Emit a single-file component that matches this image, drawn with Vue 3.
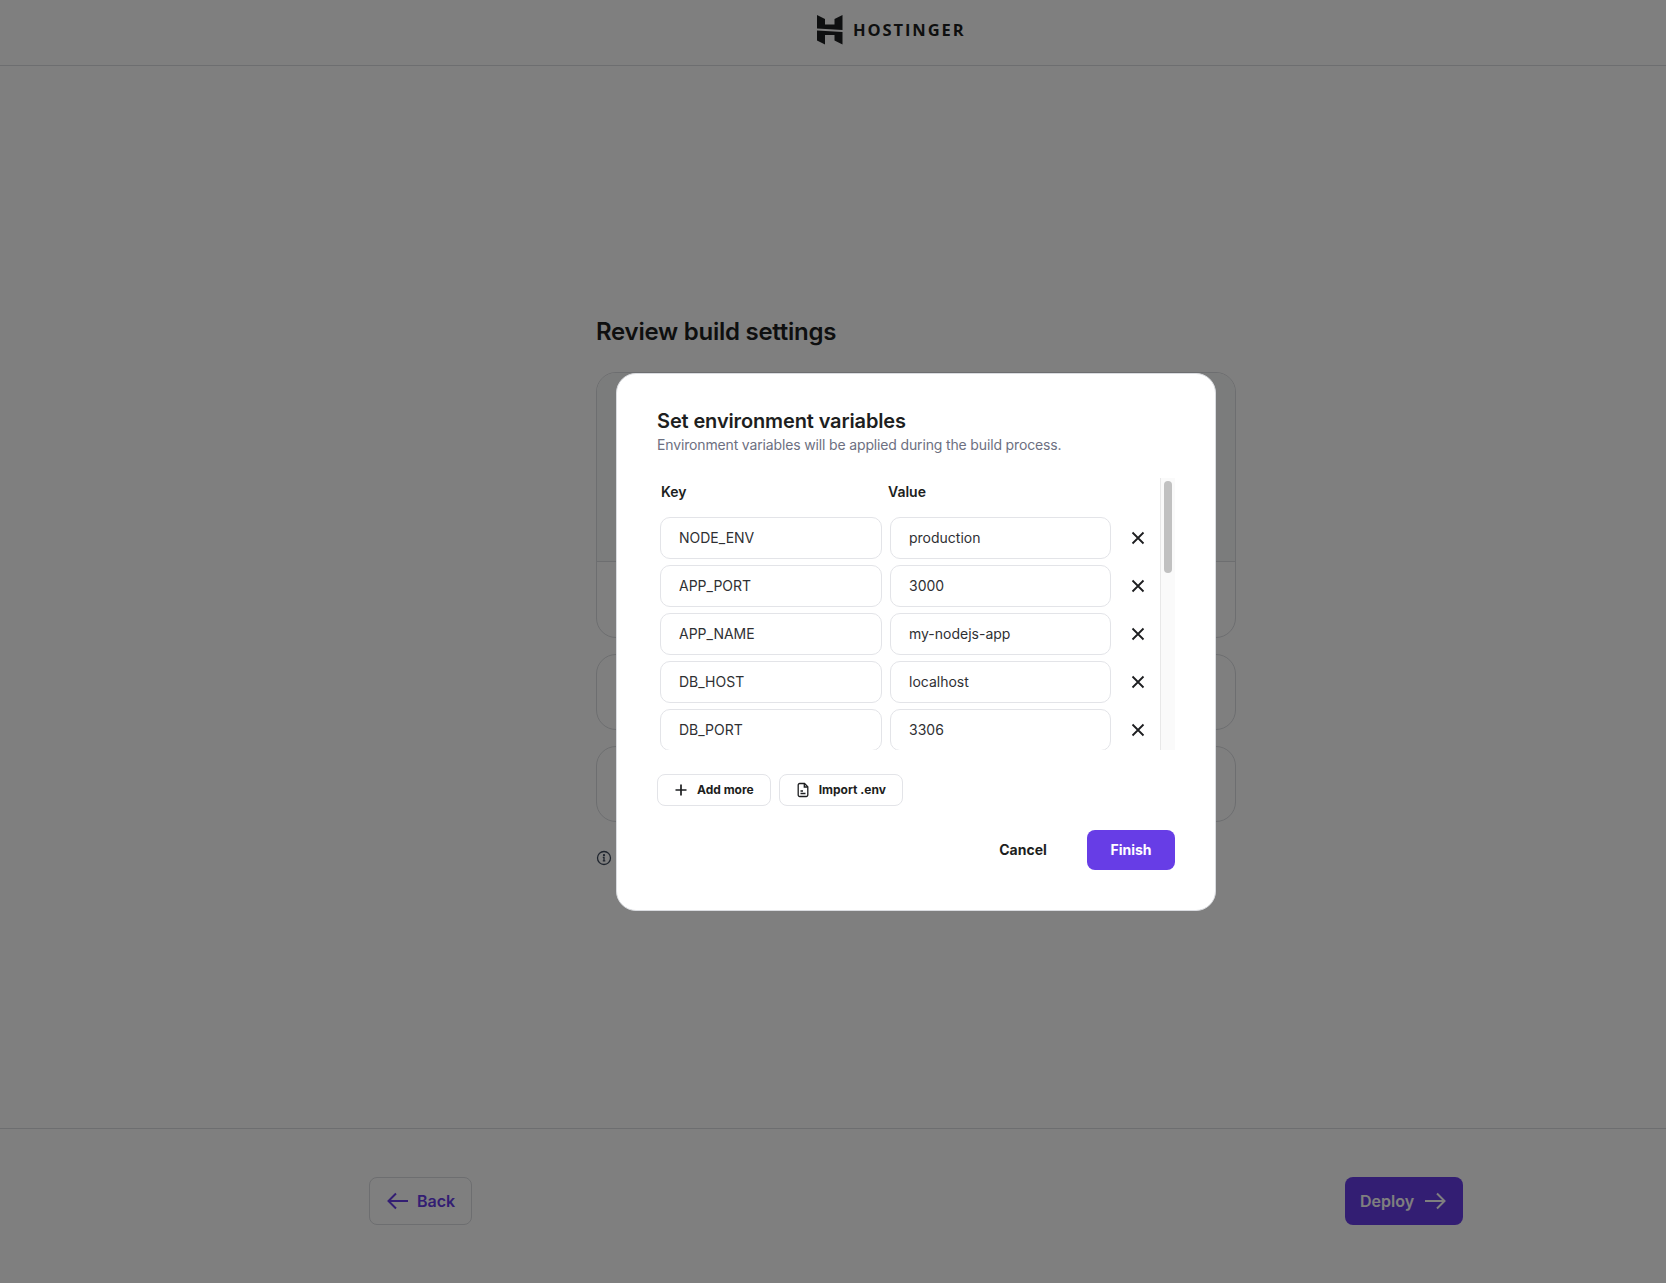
<script setup>
import { ref } from 'vue'

// Переменные окружения
const envVars = ref([
  { key: 'NODE_ENV', value: 'production' },
  { key: 'APP_PORT', value: '3000' },
  { key: 'APP_NAME', value: 'my-nodejs-app' },
  { key: 'DB_HOST', value: 'localhost' },
  { key: 'DB_PORT', value: '3306' },
  { key: 'DB_NAME', value: 'my_database' },
  { key: 'DB_USER', value: 'db_user' },
  { key: 'DB_PASSWORD', value: 'secret' },
  { key: 'REDIS_HOST', value: 'localhost' },
  { key: 'REDIS_PORT', value: '6379' },
  { key: 'LOG_LEVEL', value: 'info' },
  { key: 'SESSION_SECRET', value: 'secret' },
  { key: 'SMTP_HOST', value: 'localhost' },
  { key: 'SMTP_PORT', value: '587' },
  { key: 'API_URL', value: 'http://localhost' },
  { key: 'CACHE_TTL', value: '3600' }
])

// Положение ползунка
const thumbOffset = ref(3)

function onScroll(e) {
  const el = e.target
  const max = el.scrollHeight - el.clientHeight
  thumbOffset.value = 3 + (max > 0 ? (el.scrollTop / max) * 174 : 0)
}

function removeVar(index) {
  envVars.value.splice(index, 1)
}

function addVar() {
  envVars.value.push({ key: '', value: '' })
}
</script>

<template>
  <div class="page">
    <header class="top">
      <svg class="logo" width="26" height="30" viewBox="0 0 26 30">
        <path d="M0 0l8 4v5.500h9.500V4L25.500 0v15L0 13.500z" fill="#1d1e20" />
        <path d="M0 15.500L25.500 17v12.500l-8-4V20H8v9.500l-8-4z" fill="#1d1e20" />
      </svg>
      <span class="brand">HOSTINGER</span>
    </header>

    <main class="main">
      <h1>Review build settings</h1>
      <div class="card card-split">
        <div class="card-top"></div>
        <div class="card-bottom"></div>
      </div>
      <div class="card card-small"></div>
      <div class="card card-small"></div>
      <div class="note">
        <svg width="16" height="16" viewBox="0 0 16 16" fill="none" stroke="#3e4a5c" stroke-width="1.300">
          <circle cx="8" cy="8" r="6.500" />
          <path d="M6.800 7.300H8v3.500M6.800 10.800h2.500" />
          <circle cx="8" cy="5.200" r="0.500" />
        </svg>
      </div>
    </main>

    <footer class="bottom">
      <button class="btn-back">
        <svg width="24" height="20" viewBox="0 0 24 20" fill="none" stroke="#673de6" stroke-width="2">
          <path d="M22 10H2.500M10 2.500L2.500 10l7.500 7.500" />
        </svg>
        Back
      </button>
      <button class="btn-deploy">
        Deploy
        <svg width="24" height="20" viewBox="0 0 24 20" fill="none" stroke="#ffffff" stroke-width="2">
          <path d="M2 10h19.500M14 2.500l7.500 7.500-7.500 7.500" />
        </svg>
      </button>
    </footer>

    <!-- Модальное окно -->
    <div class="overlay">
      <div class="modal">
        <h2>Set environment variables</h2>
        <p class="subtitle">Environment variables will be applied during the build process.</p>

        <div class="table-wrap">
          <div class="table" @scroll="onScroll">
            <div class="table-head">
              <span class="head-key">Key</span>
              <span>Value</span>
            </div>
            <div v-for="(item, i) in envVars" :key="i" class="row">
              <input v-model="item.key" type="text" />
              <input v-model="item.value" type="text" />
              <button class="btn-remove" @click="removeVar(i)">
                <svg width="14" height="14" viewBox="0 0 14 14" fill="none" stroke="#1d1e20" stroke-width="1.800">
                  <path d="M1.500 1.500l11 11M12.500 1.500l-11 11" />
                </svg>
              </button>
            </div>
          </div>
          <div class="track">
            <div class="thumb" :style="{ marginTop: thumbOffset + 'px' }"></div>
          </div>
        </div>

        <div class="tools">
          <button class="btn-tool" @click="addVar">
            <svg width="16" height="16" viewBox="0 0 16 16" fill="none" stroke="#1d1e20" stroke-width="1.700">
              <path d="M8 2.500v11M2.500 8h11" />
            </svg>
            Add more
          </button>
          <button class="btn-tool">
            <svg width="16" height="16" viewBox="0 0 16 16" fill="none" stroke="#1d1e20" stroke-width="1.300">
              <path d="M3.200 3a1.500 1.500 0 0 1 1.500-1.500h4.800l3.300 3.300V13a1.500 1.500 0 0 1-1.500 1.500H4.700A1.500 1.500 0 0 1 3.200 13z" />
              <path d="M9.300 1.500v3.500h3.500M5.500 9h2.500M5.500 11.500h5" />
            </svg>
            Import .env
          </button>
        </div>

        <div class="actions">
          <button class="btn-cancel">Cancel</button>
          <button class="btn-finish">Finish</button>
        </div>
      </div>
    </div>
  </div>
</template>

<style scoped>
.page {
  height: 1283px;
  display: flex;
  flex-direction: column;
  background: #fff;
  font-family: Inter, "Liberation Sans", sans-serif;
  color: #1d1e20;
  overflow: hidden;
}

.top {
  height: 65px;
  flex: none;
  box-sizing: content-box;
  display: flex;
  align-items: center;
  padding-left: 817px;
  gap: 10px;
  border-bottom: 1px solid #dadce0;
}

.logo {
  display: block;
  margin-bottom: 6px;
}

.brand {
  font-family: "Open Sans", sans-serif;
  font-weight: 700;
  font-size: 16.500px;
  letter-spacing: 1.900px;
  margin-bottom: 7px;
}

.main {
  flex: 1;
  width: 640px;
  margin-left: 596px;
  padding-top: 250px;
  box-sizing: border-box;
}

h1 {
  margin: 0 0 24px;
  font-size: 24px;
  line-height: 32px;
  font-weight: 600;
  letter-spacing: -0.250px;
}

.card {
  box-sizing: border-box;
  border: 1px solid #dadce0;
  border-radius: 20px;
  margin-bottom: 16px;
  overflow: hidden;
}

.card-split {
  height: 266px;
}

.card-top {
  height: 188px;
  background: #f7f8f8;
  border-bottom: 1px solid #dadce0;
}

.card-small {
  height: 76px;
}

.note {
  height: 24px;
  padding: 8px 0 0;
  display: flex;
  align-items: center;
}

.bottom {
  flex: none;
  height: 155px;
  box-sizing: border-box;
  border-top: 1px solid #dadce0;
  padding: 48px 203px 0 369px;
  display: flex;
  justify-content: space-between;
  align-items: flex-start;
}

.bottom button {
  height: 48px;
  box-sizing: border-box;
  display: flex;
  align-items: center;
  border-radius: 8px;
  font: 600 16px Inter, sans-serif;
}

.btn-back {
  width: 103px;
  padding: 0 0 0 16px;
  gap: 7px;
  background: #fff;
  border: 1px solid #dadce0;
  color: #673de6;
}

.btn-deploy {
  width: 118px;
  padding: 0 0 0 15px;
  gap: 9px;
  background: #673de6;
  border: none;
  color: #fff;
}

.overlay {
  position: fixed;
  inset: 0;
  background: rgba(0, 0, 0, 0.5);
  display: flex;
  align-items: center;
  justify-content: center;
  padding-left: 166px;
}

.modal {
  width: 600px;
  height: 538px;
  box-sizing: border-box;
  background: #fff;
  border: 1px solid #dadce0;
  border-radius: 20px;
  padding: 35px 40px 40px;
}

h2 {
  margin: 0;
  font-size: 20px;
  line-height: 24px;
  font-weight: 600;
  letter-spacing: -0.130px;
}

.subtitle {
  margin: 0;
  font-size: 14px;
  line-height: 24px;
  color: #6d7081;
  letter-spacing: -0.150px;
}

.table-wrap {
  margin-top: 21px;
  height: 272px;
  display: flex;
}

.table {
  width: 503px;
  overflow-y: scroll;
  scrollbar-width: none;
}

.track {
  width: 15px;
  box-sizing: border-box;
  background: #fafafa;
  border-left: 1px solid #e8e8e8;
  overflow: hidden;
}

.thumb {
  width: 8px;
  height: 92px;
  margin-left: 3px;
  border-radius: 4px;
  background: #c1c1c1;
}

.table-head {
  height: 39px;
  display: flex;
  align-items: center;
  padding-bottom: 11px;
  box-sizing: border-box;
  font-size: 14px;
  font-weight: 600;
}

.head-key {
  width: 231px;
  padding-left: 4px;
  box-sizing: border-box;
}

.row {
  display: flex;
  align-items: center;
  padding-left: 3px;
  margin-bottom: 6px;
}

input {
  width: 222px;
  height: 42px;
  flex: none;
  box-sizing: border-box;
  padding: 0 18px;
  border: 1px solid #e3e4e8;
  border-radius: 10px;
  font: 400 14px Inter, sans-serif;
  color: #2f3033;
  outline: none;
}

input + input {
  width: 221px;
  margin-left: 8px;
}

.btn-remove {
  width: 38px;
  height: 42px;
  margin-left: 8px;
  padding: 0;
  border: none;
  background: none;
  display: flex;
  align-items: center;
  justify-content: center;
  cursor: pointer;
}

.tools {
  display: flex;
  gap: 8px;
  margin-top: 24px;
}

.btn-tool {
  height: 32px;
  box-sizing: border-box;
  padding: 0 16px 0 15px;
  display: flex;
  align-items: center;
  gap: 8px;
  background: #fff;
  border: 1px solid #e3e4e8;
  border-radius: 8px;
  font: 700 12px Inter, sans-serif;
  color: #1d1e20;
  cursor: pointer;
}

.actions {
  display: flex;
  justify-content: flex-end;
  align-items: center;
  gap: 24px;
  margin-top: 24px;
}

.actions button {
  height: 40px;
  border: none;
  border-radius: 8px;
  font: 700 14px Inter, sans-serif;
  cursor: pointer;
}

.btn-cancel {
  width: 80px;
  background: none;
  color: #1d1e20;
}

.btn-finish {
  width: 88px;
  background: #673de6;
  color: #fff;
}
</style>
